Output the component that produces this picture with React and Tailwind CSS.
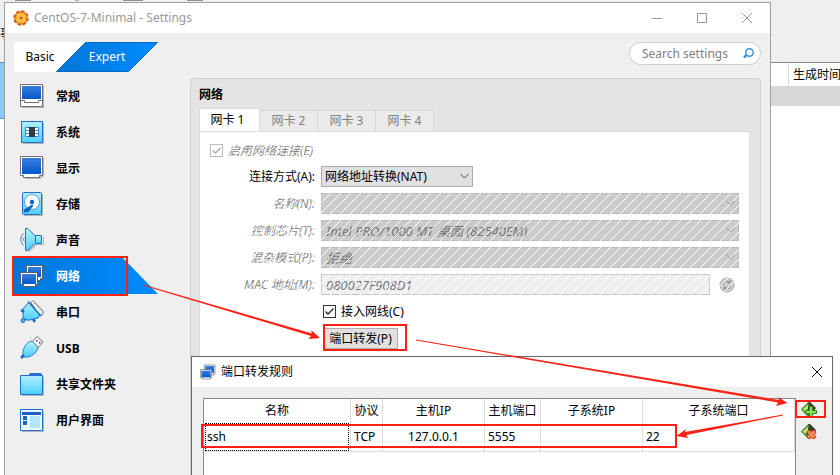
import React, { useState } from 'react';

const adapters = ['网卡 1', '网卡 2', '网卡 3', '网卡 4'];

const rules = [
  { name: 'ssh', protocol: 'TCP', hostIp: '127.0.0.1', hostPort: '5555', guestIp: '', guestPort: '22' },
];

// Gradients shared by the category icons
function IconDefs() {
  return (
    <svg className="absolute w-0 h-0" aria-hidden="true">
      <defs>
        <linearGradient id="screen" x1="0" y1="0" x2="0" y2="1">
          <stop offset="0" stopColor="#3a7ddc" />
          <stop offset="1" stopColor="#0058cc" />
        </linearGradient>
        <linearGradient id="cyan" x1="0" y1="0" x2="0" y2="1">
          <stop offset="0" stopColor="#b4f0ff" />
          <stop offset="1" stopColor="#4ccfff" />
        </linearGradient>
        <linearGradient id="accent" x1="0" y1="0" x2="1" y2="0">
          <stop offset="0" stopColor="#0076d7" />
          <stop offset="1" stopColor="#008cff" />
        </linearGradient>
      </defs>
    </svg>
  );
}

function GeneralIcon() {
  return (
    <>
      <path d="M2 2h22v22H2z" fill="#b5b5b5" />
      <path d="M.5.500h22v22H.5z" fill="#fff" stroke="#707070" />
      <path d="M2 2h19v13H2z" fill="url(#screen)" />
      <path d="M1 16.500h3.500v2h14v-2H22" fill="none" stroke="#707070" />
    </>
  );
}

function SystemIcon() {
  return (
    <>
      <path d="M3 3h21v21H3z" fill="#b5b5b5" />
      <path d="M1.500 1.500h21v21h-21z" fill="url(#cyan)" stroke="#1f6fc8" />
      <path d="M5.500 7.500h13v9h-13z" fill="#fff" stroke="#3c86c8" />
      <path d="M5 10.500h14M5 13.500h14" stroke="#3c86c8" />
      <path d="M9 7h6v10H9z" fill="#333b45" />
    </>
  );
}

function DisplayIcon() {
  return (
    <>
      <path d="M2 2h22v19h-3v2H5v-2H2z" fill="#b5b5b5" />
      <path d="M.5.500h22v19h-3v2h-16v-2h-3z" fill="#fff" stroke="#707070" />
      <path d="M2 2h19v16H2z" fill="url(#screen)" />
    </>
  );
}

function StorageIcon() {
  return (
    <>
      <path d="M4 2h19v22H4z" fill="#b5b5b5" />
      <rect x="2.500" y=".5" width="19" height="22" rx="1" fill="url(#cyan)" stroke="#1c70cc" />
      <circle cx="12" cy="10" r="7.500" fill="#fff" stroke="#5b9bd8" />
      <circle cx="12" cy="10" r="2.200" fill="#0062c8" />
      <path d="M4 20.500v-3l8-5 1.500 1-5 6.500z" fill="#1768c4" />
    </>
  );
}

function SoundIcon() {
  return (
    <>
      <path d="M7 23l9-7h7V9h1v8h-7l-8 7z" fill="#b5b5b5" />
      <path d="M5.500.500h2l8 7.500v7l-8 7.500h-2z" fill="url(#cyan)" stroke="#1f70c8" />
      <path d="M15.500 7.500h6v8h-6z" fill="url(#cyan)" stroke="#1f70c8" />
      <path d="M3.500 5.500c-3.500 3-3.500 9 0 12M4.500 9.500c-1.500 1-1.500 3 0 4" fill="none" stroke="#2a7cd0" />
    </>
  );
}

function NetworkIcon() {
  return (
    <>
      <path d="M6.500 1.500h16v13h-2v2h-12v-2h-2z" fill="#fff" stroke="#606060" />
      <path d="M8 3h13v10H8z" fill="url(#screen)" />
      <path d="M.5 8.500h17v12h-2v2h-12v-2h-3z" fill="#fff" stroke="#606060" />
      <path d="M2 10h14v10H2z" fill="url(#screen)" />
    </>
  );
}

function SerialIcon() {
  return (
    <>
      <path d="M11 2.500l2-2 10 10.500v3l-3 2z" fill="#fff" stroke="#707070" />
      <path d="M14 3l7 8" stroke="#707070" strokeDasharray="1 1.500" />
      <path d="M3 9l6-7 11 13-2 3-8 2H6l-3-3z" fill="url(#cyan)" stroke="#1f6fc8" />
      <path d="M8 1.500L21 16" stroke="#1f6fc8" strokeWidth="1.500" />
      <path d="M1 10l3 2M13 19l2 3" stroke="#1766c4" strokeWidth="2.500" />
      <circle cx="3" cy="20.500" r="2" fill="#4cb8f4" stroke="#1766c4" />
    </>
  );
}

function UsbIcon() {
  return (
    <>
      <path d="M12 6l5-5.500L23 6l-5 6z" fill="#fff" stroke="#707070" />
      <path d="M16 4h1.500v1.500H16zM19 6h1.500v1.500H19z" fill="#333" />
      <path d="M3 20c-1-7 3-14 9-15l6 6c-1 6-7 11-14 10z" fill="url(#cyan)" stroke="#3a82cc" />
      <path d="M4 19l-3 3" stroke="#1766c4" strokeWidth="2.500" />
    </>
  );
}

function FolderIcon() {
  return (
    <>
      <path d="M2 5h22v19H2z" fill="#b5b5b5" />
      <path d="M.5 3.500h22v19H.5z" fill="url(#cyan)" stroke="#1c70cc" />
      <path d="M8 4l2-3h11l2 3z" fill="#2a6fd0" />
    </>
  );
}

function InterfaceIcon() {
  return (
    <>
      <path d="M2 3h22v21H2z" fill="#b5b5b5" />
      <path d="M.5 1.500h22v21H.5z" fill="#eafaff" stroke="#1c70cc" />
      <path d="M2 4h19v3H2zM3 8h4v4H3zM3 13h4v4H3z" fill="#1c62c4" />
      <path d="M10 8h10v12H10z" fill="#b4e6fa" />
    </>
  );
}

const categories = [
  { label: '常规', Icon: GeneralIcon },
  { label: '系统', Icon: SystemIcon },
  { label: '显示', Icon: DisplayIcon },
  { label: '存储', Icon: StorageIcon },
  { label: '声音', Icon: SoundIcon },
  { label: '网络', Icon: NetworkIcon },
  { label: '串口', Icon: SerialIcon },
  { label: 'USB', Icon: UsbIcon },
  { label: '共享文件夹', Icon: FolderIcon },
  { label: '用户界面', Icon: InterfaceIcon },
];

function GearIcon() {
  return (
    <svg className="w-4 h-4" viewBox="0 0 16 16">
      <circle cx="8" cy="8" r="6.700" fill="#f6a823" stroke="#d8541e" strokeWidth="2" strokeDasharray="3.500 1.760" />
      <circle cx="8" cy="8" r="6" fill="#fbb62c" stroke="#e0601f" strokeWidth=".8" />
      <circle cx="8" cy="8" r="3.800" fill="none" stroke="#fdd878" />
      <circle cx="8" cy="8" r="1.200" fill="#c8481c" />
      <path d="M8 3.500v1M8 11.500v1M3.500 8h1M11.500 8h1" stroke="#d8641e" />
    </svg>
  );
}

function WindowGlyph({ d }) {
  return (
    <svg className="w-[10px] h-[10px]" viewBox="0 0 10 10" fill="none" stroke="currentColor">
      <path d={d} />
    </svg>
  );
}

function Chevron({ className }) {
  return (
    <svg className={`absolute right-1 top-[7px] w-[9px] h-[7px] pointer-events-none ${className}`} viewBox="0 0 9 7" fill="none" stroke="currentColor">
      <path d="M.5 1l4 4 4-4" />
    </svg>
  );
}

// White diagonal lines over everything that is disabled
function Hatch() {
  return <span className="absolute inset-0 pointer-events-none bg-[linear-gradient(135deg,transparent_45%,#fff_46%,#fff_54%,transparent_55%)] bg-[length:10px_10px]" />;
}

function DisabledSelect({ id, value }) {
  return (
    <div className="relative">
      <select id={id} disabled className="block w-full h-[21px] pl-1 appearance-none border border-[#bdbdbd] bg-[#cbcbcb] text-[13px] leading-4 text-[#777] italic opacity-100">
        <option>{value}</option>
      </select>
      <Chevron className="text-[#999]" />
      <Hatch />
    </div>
  );
}

function RuleIcon({ remove }) {
  return (
    <svg className="w-4 h-4" viewBox="0 0 16 16">
      <path d="M0 7.500L7.500 0 9 0l6 6-7 9z" fill="#3b3b2e" />
      <path d="M0 7.500L7 1l1.500 2L4 8l4 5-1 2z" fill="#4a9c32" />
      <path d="M1.500 7.500L7 2.500v4L4.500 10z" fill="#b2e864" />
      {remove ? (
        <path d="M6 8l2-2 2.500 1.500L13 6l2 2-1.500 2.500L15 13l-2 2-2.500-1.500L8 15l-2-2 1.500-2.500z" fill="#f8855a" stroke="#d0401c" />
      ) : (
        <path d="M8.500 4.500h3v4h4v3h-4v4h-3v-4h-4v-3h4z" fill="#8fe25a" stroke="#2c8a1c" />
      )}
    </svg>
  );
}

function SettingsWindow() {
  const [selected, setSelected] = useState('网络');
  const [cable, setCable] = useState(true);

  return (
    <section className="absolute left-1 right-[69px] top-[2px] -bottom-px flex flex-col border border-[#a0a0a0] bg-[#efefef]">
      <header className="flex items-center h-[30px] shrink-0 pl-2 pr-[18px] bg-white text-[#999]">
        <GearIcon />
        <h1 className="ml-[5px] flex-1">CentOS-7-Minimal - Settings</h1>
        <div className="flex items-center gap-[35px]">
          <button aria-label="Minimize"><WindowGlyph d="M0 5.500h10" /></button>
          <button aria-label="Maximize"><WindowGlyph d="M.5.500h9v9h-9z" /></button>
          <button aria-label="Close"><WindowGlyph d="M0 0l10 10M10 0L0 10" /></button>
        </div>
      </header>

      <div className="flex items-start justify-between h-[45px] shrink-0 pt-[9px] pl-[9px] pr-[9px]">
        <div className="relative flex h-[30px]">
          <svg className="absolute left-0 top-0 w-[144px] h-[30px]" viewBox="0 0 144 30">
            <path d="M0 0h71L42 30H0z" fill="#fff" />
            <path d="M71.500.5h72l-29 29h-72z" fill="url(#accent)" stroke="#0068bd" />
          </svg>
          <button className="relative w-[52px]">Basic</button>
          <button className="relative w-[82px] text-white">Expert</button>
        </div>
        <label className="flex items-center w-[132px] h-[23px] pl-3 pr-[6px] rounded-full border border-[#ccc] bg-white">
          <input type="text" aria-label="Search settings" placeholder="Search settings" className="flex-1 min-w-0 outline-none placeholder:text-[#808080]" />
          <svg className="w-[11px] h-[11px]" viewBox="0 0 11 11" fill="none" stroke="#3a94dc">
            <circle cx="6.500" cy="4.500" r="3.700" strokeWidth="1.500" />
            <path d="M3.500 7L1 9.500" strokeWidth="2.500" />
          </svg>
        </label>
      </div>

      <div className="flex flex-1 min-h-0 pr-[9px]">
        <nav className="w-[185px] shrink-0 pl-[9px]">
          {categories.map(({ label, Icon }) => (
            <button key={label} onClick={() => setSelected(label)} className={`relative flex items-center w-[144px] h-9 pl-[6px] font-bold text-left ${label === selected ? 'text-white' : 'text-black'}`}>
              {label === selected && (
                <svg className="absolute inset-0 w-full h-full" viewBox="0 0 144 36">
                  <path d="M0 0h109l35 36H0z" fill="url(#accent)" />
                </svg>
              )}
              <svg className="relative w-6 h-6 mr-3" viewBox="0 0 24 24"><Icon /></svg>
              <span className="relative pt-0.5">{label}</span>
            </button>
          ))}
        </nav>

        <main className="flex flex-col flex-1 min-w-0 px-2 rounded-t border border-b-0 border-[#d0d0d0] bg-[#e4e4e4]">
          <h2 className="h-[29px] pt-2 font-bold leading-4">网络</h2>
          <div role="tablist" className="flex items-end h-[23px]">
            {adapters.map((name, i) => (
              <button key={name} role="tab" aria-selected={i === 0} className={i === 0 ? 'w-[61px] h-[23px] pr-1 bg-white border-x border-t border-[#dcdcdc]' : 'w-[58px] h-[21px] bg-[#ebebeb] border-r border-t border-[#d5d5d5] text-[#808080]'}>
                {name}
              </button>
            ))}
          </div>
          <div className="flex-1 mr-[2px] px-[10px] pt-[9px] border border-[#dcdcdc] bg-white">
            <label className="flex items-center gap-[5px] h-[19px] italic text-[#888]">
              <span className="relative flex">
                <input type="checkbox" checked disabled readOnly className="appearance-none w-[13px] h-[13px] border border-[#bbb]" />
                <svg className="absolute inset-0 w-[13px] h-[13px]" viewBox="0 0 13 13" fill="none" stroke="#aaa"><path d="M3 6.500L5.500 9 10.500 4" strokeWidth="1.300" /></svg>
              </span>
              <span className="relative">启用网络连接(E)<Hatch /></span>
            </label>

            <form className="grid grid-cols-[105px_1fr] gap-x-[6px] gap-y-[6px] items-center mt-[6px]">
              <label htmlFor="attach" className="text-right">连接方式(A):</label>
              <div className="relative w-[152px]">
                <select id="attach" className="block w-full h-[21px] pl-[3px] appearance-none border border-[#acacac] bg-[#e1e1e1]">
                  <option>网络地址转换(NAT)</option>
                </select>
                <Chevron className="text-[#444]" />
              </div>

              <label htmlFor="name" className="relative text-right italic text-[#888]">名称(N):<Hatch /></label>
              <DisabledSelect id="name" value="" />

              <label htmlFor="chip" className="relative text-right italic text-[#888]">控制芯片(T):<Hatch /></label>
              <DisabledSelect id="chip" value="Intel PRO/1000 MT 桌面 (82540EM)" />

              <label htmlFor="mode" className="relative text-right italic text-[#888]">混杂模式(P):<Hatch /></label>
              <DisabledSelect id="mode" value="拒绝" />

              <label htmlFor="mac" className="relative text-right italic text-[#888]">MAC 地址(M):<Hatch /></label>
              <div className="flex items-center gap-[9px]">
                <div className="relative flex-1">
                  <input id="mac" type="text" disabled value="080027F908D1" readOnly className="block w-full h-[21px] pl-1 border border-[#c8c8c8] bg-[#efefef] text-[13px] leading-4 italic text-[#777]" />
                  <Hatch />
                </div>
                <button type="button" disabled aria-label="Refresh" className="relative mr-1">
                  <svg className="w-4 h-4" viewBox="0 0 16 16" fill="none">
                    <circle cx="8" cy="8" r="7" fill="#d0d0d0" stroke="#a4a4a4" />
                    <path d="M4 8a4 4 0 017-2.500M12 8a4 4 0 01-7 2.500M11 3v3H8M5 13v-3h3" stroke="#8a8a8a" />
                  </svg>
                  <Hatch />
                </button>
              </div>

              <label className="col-start-2 flex items-center gap-[5px] h-[21px] pl-[2px]">
                <span className="relative flex">
                  <input type="checkbox" checked={cable} onChange={(e) => setCable(e.target.checked)} className="appearance-none w-[13px] h-[13px] border border-[#333] bg-white" />
                  {cable && <svg className="absolute inset-0 w-[13px] h-[13px] pointer-events-none" viewBox="0 0 13 13" fill="none" stroke="#222"><path d="M2.500 6.500L5 9l5.500-5.500" strokeWidth="1.300" /></svg>}
                </span>
                接入网线(C)
              </label>

              <button type="button" className="col-start-2 justify-self-start ml-[2px] w-[75px] h-[21px] border border-[#adadad] bg-[#e1e1e1]">端口转发(P)</button>
            </form>
          </div>
        </main>
      </div>
    </section>
  );
}

function RulesDialog() {
  const th = 'h-6 p-0 font-normal border-r border-[#dcdcdc]';
  const td = 'h-[29px] px-[3px] py-0 border-r border-b border-[#dcdcdc]';

  return (
    <section role="dialog" aria-label="端口转发规则" className="absolute left-[191px] right-[7px] top-[356px] -bottom-px flex flex-col border border-[#666] bg-[#efefef]">
      <header className="flex items-center gap-[5px] h-[30px] shrink-0 pl-2 pr-[10px] bg-white">
        <svg className="w-4 h-4" viewBox="0 0 24 24"><NetworkIcon /></svg>
        <h2 className="flex-1">端口转发规则</h2>
        <button aria-label="Close"><WindowGlyph d="M0 0l10 10M10 0L0 10" /></button>
      </header>
      <div className="flex flex-1 pt-[11px] pl-[11px]">
        <div className="flex-1 border border-b-0 border-[#828790] bg-white">
          <table className="w-full table-fixed border-separate border-spacing-0">
            <colgroup>
              <col className="w-[147px]" />
              <col className="w-8" />
              <col className="w-[102px]" />
              <col className="w-14" />
              <col className="w-[102px]" />
              <col />
            </colgroup>
            <thead>
              <tr>
                <th className={th}>名称</th>
                <th className={th}>协议</th>
                <th className={th}>主机IP</th>
                <th className={th}>主机端口</th>
                <th className={th}>子系统IP</th>
                <th className={th}>子系统端口</th>
              </tr>
            </thead>
            <tbody>
              {rules.map((rule) => (
                <tr key={rule.name}>
                  <td className="h-[29px] p-0 border-r border-b border-[#dcdcdc]">
                    <div className="flex items-center h-7 mx-px pl-px border border-dotted border-black">{rule.name}</div>
                  </td>
                  <td className={td}>{rule.protocol}</td>
                  <td className={`${td} text-center`}>{rule.hostIp}</td>
                  <td className={td}>{rule.hostPort}</td>
                  <td className={td}>{rule.guestIp}</td>
                  <td className={td}>{rule.guestPort}</td>
                </tr>
              ))}
            </tbody>
          </table>
        </div>
        <div className="flex flex-col gap-[6px] w-9 pl-[5px] pt-1">
          <button aria-label="Add rule"><RuleIcon /></button>
          <button aria-label="Remove rule"><RuleIcon remove /></button>
        </div>
      </div>
    </section>
  );
}

// Red boxes and arrows that walk through the steps
function Annotations() {
  return (
    <svg className="absolute left-0 top-0 w-[840px] h-[475px] pointer-events-none" viewBox="0 0 840 475" fill="none">
      <g stroke="#fa2114" strokeWidth="2">
        <rect x="13" y="257" width="114" height="38" />
        <rect x="324" y="325" width="82" height="25" />
        <rect x="202" y="425" width="474" height="22" />
        <rect x="796" y="401" width="29" height="16" />
      </g>
      <g fill="#fa2114">
        <path d="M143 284.500l169 49-1-3.500 9 8-11.500 1 2.500-3L143 285.500z" />
        <path d="M416 339.500l363 60.500-1-3 9.500 6-11.500 3 2-3.500L416 340.500z" />
        <path d="M783 414.500l-98 17.500 1-3-9.500 7 11.500 2-1.500-3L783 415.500z" />
      </g>
    </svg>
  );
}

export default function App() {
  return (
    <div className="relative h-screen overflow-hidden bg-white text-xs text-black font-['Noto_Sans','Noto_Sans_CJK_SC',sans-serif]">
      <IconDefs />
      <div className="h-[62px] bg-[#efefef]">
        <div className="flex gap-11 h-6 pl-[15px]">
          <span className="w-4 h-px bg-[#909090]" />
          <span className="w-1 h-px bg-[#b0b0b0]" />
          <span className="w-5 h-px bg-[#909090]" />
          <span className="w-4 h-px bg-[#909090]" />
        </div>
        <div className="leading-5">事</div>
      </div>
      <div className="flex h-6 border-t border-[#828790]">
        <div className="w-1 bg-[#8cc8ff]" />
        <div className="flex-1" />
        <div className="w-[52px] pl-1 leading-6 border-l border-[#dcdcdc] whitespace-nowrap">生成时间</div>
      </div>
      <div className="flex h-5">
        <div className="w-1 bg-[#8cc8ff]" />
        <div className="flex-1 bg-[#d8d8d8]" />
      </div>
      <div className="w-1 h-[13px] bg-[#8cc8ff] border-b border-[#58a8f0]" />
      <SettingsWindow />
      <RulesDialog />
      <Annotations />
    </div>
  );
}
